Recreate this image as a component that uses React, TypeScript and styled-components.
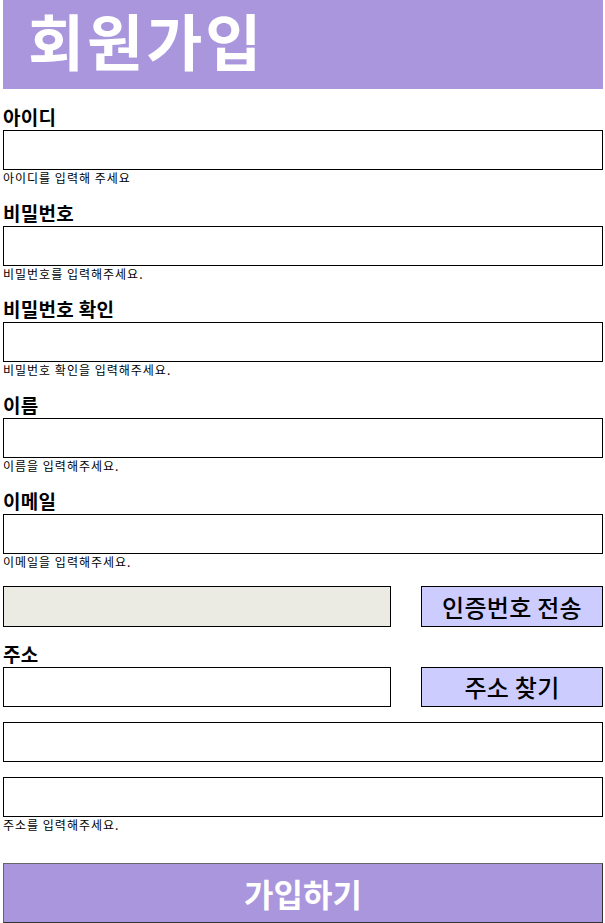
import React from "react";
import styled, { createGlobalStyle } from "styled-components";

const Global = createGlobalStyle`
  html, body { margin: 0; padding: 0; background: #fff; }
  body { font-family: "Noto Sans CJK KR", "Noto Sans", sans-serif; color: #000; }
  * { box-sizing: border-box; }
`;

const Page = styled.div`
  width: 600px;
  margin-left: 3px;
`;

const Header = styled.header`
  background: #a996dd;
  padding: 0 0 9px 25px;
`;

const Title = styled.h1`
  margin: 0;
  font-size: 61px;
  line-height: 80px;
  font-weight: 700;
  color: #fff;
  letter-spacing: 3px;
  white-space: nowrap;
`;

const Form = styled.form`
  display: flex;
  flex-direction: column;
  padding-top: 17px;
`;

const Field = styled.div<{ $gap?: number }>`
  display: flex;
  flex-direction: column;
  margin-top: ${(p) => p.$gap ?? 16}px;
  &:first-child { margin-top: 0; }
`;

const Label = styled.label`
  font-size: 19px;
  line-height: 22px;
  font-weight: 700;
  height: 24px;
  letter-spacing: 0.3px;
`;

const Input = styled.input<{ $w?: number }>`
  display: block;
  width: ${(p) => (p.$w ? `${p.$w}px` : "100%")};
  height: 40px;
  margin: 0;
  border: 1px solid #000;
  background: #fff;
  font-size: 16px;
  padding: 0 6px;
  outline: none;
  &:disabled { background: #ebebe4; }
`;

const Help = styled.div`
  font-size: 12px;
  line-height: 16px;
  height: 16px;
  color: #000;
  letter-spacing: 1px;
`;

const Row = styled.div<{ $h: number }>`
  display: flex;
  justify-content: space-between;
  height: ${(p) => p.$h}px;
  & > input { height: 100%; }
`;

const SideButton = styled.button`
  width: 182px;
  height: 100%;
  margin: 0;
  padding: 0;
  border: 1px solid #000;
  background: #ccccff;
  font-family: "Noto Sans CJK KR", sans-serif;
  font-size: 24px;
  font-weight: 500;
  line-height: 1;
  color: #000;
  letter-spacing: 0.3px;
`;

const Submit = styled.button`
  width: 600px;
  height: 60px;
  margin-top: 30px;
  padding: 0;
  border: 1px solid #333;
  border-top-color: #666;
  border-left-color: #666;
  background: #a996dd;
  color: #fff;
  font-family: "Noto Sans CJK KR", sans-serif;
  font-size: 32px;
  font-weight: 700;
  line-height: 1;
`;

export default function App() {
  return (
    <>
      <Global />
      <Page>
        <Header>
          <Title>회원가입</Title>
        </Header>
        <Form onSubmit={(e) => e.preventDefault()}>
          <Field>
            <Label>아이디</Label>
            <Input type="text" />
            <Help>아이디를 입력해 주세요</Help>
          </Field>
          <Field>
            <Label>비밀번호</Label>
            <Input type="password" />
            <Help>비밀번호를 입력해주세요.</Help>
          </Field>
          <Field>
            <Label>비밀번호 확인</Label>
            <Input type="password" />
            <Help>비밀번호 확인을 입력해주세요.</Help>
          </Field>
          <Field>
            <Label>이름</Label>
            <Input type="text" />
            <Help>이름을 입력해주세요.</Help>
          </Field>
          <Field>
            <Label>이메일</Label>
            <Input type="email" />
            <Help>이메일을 입력해주세요.</Help>
          </Field>
          <Field $gap={16}>
            <Row $h={41}>
              <Input type="text" disabled $w={388} />
              <SideButton type="button">인증번호 전송</SideButton>
            </Row>
          </Field>
          <Field $gap={16}>
            <Label>주소</Label>
            <Row $h={40}>
              <Input type="text" $w={388} />
              <SideButton type="button">주소 찾기</SideButton>
            </Row>
          </Field>
          <Field $gap={15}>
            <Input type="text" />
          </Field>
          <Field $gap={15}>
            <Input type="text" />
            <Help>주소를 입력해주세요.</Help>
          </Field>
          <Submit type="submit">가입하기</Submit>
        </Form>
      </Page>
    </>
  );
}
